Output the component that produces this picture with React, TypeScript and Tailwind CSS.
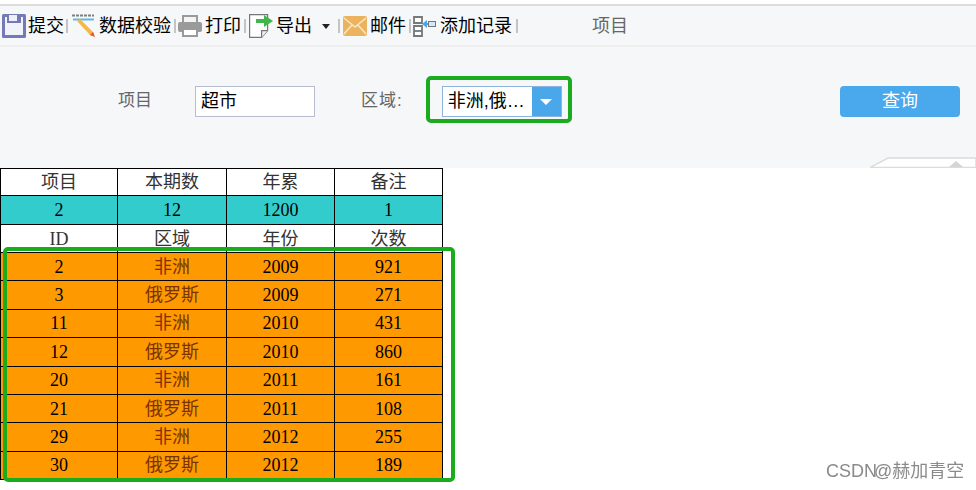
const sans = "font-['Liberation_Sans','Noto_Sans_CJK_SC',sans-serif]";

const dataRows = [
  ["2", "非洲", "2009", "921"],
  ["3", "俄罗斯", "2009", "271"],
  ["11", "非洲", "2010", "431"],
  ["12", "俄罗斯", "2010", "860"],
  ["20", "非洲", "2011", "161"],
  ["21", "俄罗斯", "2011", "108"],
  ["29", "非洲", "2012", "255"],
  ["30", "俄罗斯", "2012", "189"],
];

function Sep({ className }: { className: string }) {
  return <span className={`w-[2px] h-[14px] bg-[#c4c4c4] shrink-0 ${className}`} />;
}

function SaveIcon() {
  return (
    <svg width="24" height="24" viewBox="0 0 24 24">
      <rect x="0" y="0" width="24" height="24" rx="1.5" fill="#7479b8" />
      <path d="M3 3h18v18H3z" fill="#f2f3fa" />
      <path d="M5 0h14v9H5z" fill="#7479b8" />
      <path d="M7 1h8v6H7z" fill="#eef0f8" />
    </svg>
  );
}

function CheckIcon() {
  return (
    <svg width="24" height="24" viewBox="0 0 24 24">
      <path d="M0 1.5h22" stroke="#7f7f7f" strokeWidth="2" strokeDasharray="3 1" />
      <path d="M1 5.5h21" stroke="#5cb8e8" strokeWidth="2" />
      <path d="M5 7l3-2 14 14-1 3-3-1z" fill="#f2b84b" />
      <path d="M18 21l3-3 2 5z" fill="#e5532d" />
    </svg>
  );
}

function PrintIcon() {
  return (
    <svg width="24" height="24" viewBox="0 0 24 24">
      <path d="M5 2h14v7H5z" fill="#f4f4f4" stroke="#9a9a9a" strokeWidth="2" />
      <rect x="0" y="8" width="24" height="10" rx="2" fill="#9a9a9a" />
      <path d="M5 15h14v7H5z" fill="#fff" stroke="#9a9a9a" strokeWidth="2" />
    </svg>
  );
}

function ExportIcon() {
  return (
    <svg width="24" height="24" viewBox="0 0 24 24">
      <path d="M.6.6h18v16l-6 6.8H.6z" fill="#fff" stroke="#777" strokeWidth="1.2" />
      <path d="M12.6 23.4v-6.8h6" fill="#eee" stroke="#777" strokeWidth="1.2" />
      <path d="M7 5h8V1l9 6-9 6V9H7z" fill="#3fb54a" />
    </svg>
  );
}

function MailIcon() {
  return (
    <svg width="24" height="20" viewBox="0 0 24 20">
      <rect width="24" height="20" rx="2" fill="#ecb35f" />
      <path d="M1 2l11 9 11-9M1 18l8-9M23 18l-8-9" fill="none" stroke="#fbe6c4" strokeWidth="1.5" />
    </svg>
  );
}

function AddIcon() {
  return (
    <svg width="23" height="21" viewBox="0 0 23 21">
      <path d="M1 1h8v6H1zM1 10h8v10H1z" fill="#fff" stroke="#777" strokeWidth="1.8" />
      <path d="M1 15h8" stroke="#777" strokeWidth="1.8" />
      <path d="M9 8l5-4v8z" fill="#4aa5ee" />
      <path d="M14 8h2" stroke="#4aa5ee" strokeWidth="2" />
      <rect x="15.5" y="5.5" width="7" height="5" fill="#d5e8f8" stroke="#777" />
    </svg>
  );
}

function Toolbar() {
  return (
    <div className={`h-[43px] mt-[4px] pt-[1px] border-t-2 border-b-2 border-t-[#dcdcdc] border-b-[#eeeeee] bg-[#f6f7f9] flex items-center pl-[2px] text-[18px] text-black ${sans}`}>
      <SaveIcon />
      <span className="ml-[2px]">提交</span>
      <Sep className="ml-[2px]" />
      <span className="ml-[4px] flex"><CheckIcon /></span>
      <span className="ml-[3px]">数据校验</span>
      <Sep className="ml-[3px]" />
      <span className="ml-[2px] flex"><PrintIcon /></span>
      <span className="ml-[3px]">打印</span>
      <Sep className="ml-[3px]" />
      <span className="ml-[3px] flex"><ExportIcon /></span>
      <span className="ml-[3px]">导出</span>
      <span className="ml-[10px] w-0 h-0 border-x-[4.5px] border-t-[5px] border-x-transparent border-t-[#222]" />
      <Sep className="ml-[8px]" />
      <span className="ml-[3px] flex"><MailIcon /></span>
      <span className="ml-[3px]">邮件</span>
      <Sep className="ml-[3px]" />
      <span className="ml-[2px] flex"><AddIcon /></span>
      <span className="ml-[4px]">添加记录</span>
      <Sep className="ml-[4px]" />
      <span className="ml-[74px] text-[#666]">项目</span>
    </div>
  );
}

function FilterBar() {
  return (
    <div className={`relative h-[121px] bg-[#f6f7f9] flex items-start pt-[39px] text-[17px] ${sans}`}>
      <span className="ml-[118px] mt-[2px] text-[#666] leading-[25px]">项目</span>
      <div className="ml-[43px] w-[120px] h-[31px] bg-white border border-[#b6bdd0] pl-[5px] text-[18px] leading-[29px] text-black">超市</div>
      <span className="ml-[46px] mt-[2px] text-[#666] tracking-[1px] leading-[25px]">区域:</span>
      <div className="ml-[23px] -mt-[10px] w-[146px] h-[47px] border-[4px] border-[#1aab1f] rounded-[5px] pl-[12px] pt-[6px]">
        <div className="w-[120px] h-[31px] flex border border-[#8fb4dc] bg-white">
          <span className="flex-1 pl-[5px] text-[18px] leading-[29px] text-black whitespace-nowrap overflow-hidden">非洲,俄…</span>
          <span className="w-[29px] bg-[#4aa8ea] flex items-center justify-center">
            <span className="w-0 h-0 border-x-[6px] border-t-[6px] border-x-transparent border-t-white" />
          </span>
        </div>
      </div>
      <button className="absolute left-[840px] top-[39px] w-[120px] h-[31px] bg-[#4aa8ec] rounded-[4px] text-white text-[18px] leading-[31px]">查询</button>
      <div className="absolute right-0 bottom-0 w-[106px] h-[11px]">
        <svg width="106" height="11" viewBox="0 0 106 11">
          <path d="M0 10.5L18 1H106V10.5z" fill="#fff" stroke="#dcdcdc" strokeWidth="1.5" />
          <path d="M79 10l7-6 7 6z" fill="#d4d4d4" />
        </svg>
      </div>
    </div>
  );
}

function Row({ cells, bg, h, top }: { cells: string[]; bg: string; h: string; top?: boolean }) {
  return (
    <tr className={`${bg} ${h}`}>
      {cells.map((c, i) => (
        <td key={i} className={`border border-black p-0 text-center ${top ? "text-[#333]" : ""}`}>
          {c}
        </td>
      ))}
    </tr>
  );
}

function DataTable() {
  return (
    <table className="table-fixed border-collapse w-[442px] text-[18px] leading-[24px] text-black font-['Liberation_Serif','Noto_Sans_CJK_SC',serif]">
      <colgroup>
        <col className="w-[117px]" />
        <col className="w-[109px]" />
        <col className="w-[108px]" />
        <col className="w-[108px]" />
      </colgroup>
      <tbody>
        <Row cells={["项目", "本期数", "年累", "备注"]} bg="bg-white" h="h-[27px]" top />
        <Row cells={["2", "12", "1200", "1"]} bg="bg-[#33cccc]" h="h-[29px]" />
        <Row cells={["ID", "区域", "年份", "次数"]} bg="bg-white" h="h-[28px]" top />
        {dataRows.map((r) => (
          <tr key={r[0]} className="bg-[#ff9900] h-[28.4px]">
            <td className="border border-black p-0 text-center">{r[0]}</td>
            <td className="border border-black p-0 text-center text-[#7a3300]">{r[1]}</td>
            <td className="border border-black p-0 text-center">{r[2]}</td>
            <td className="border border-black p-0 text-center">{r[3]}</td>
          </tr>
        ))}
      </tbody>
    </table>
  );
}

export default function App() {
  return (
    <div className="relative w-[976px] h-[490px] overflow-hidden bg-white">
      <Toolbar />
      <FilterBar />
      <DataTable />
      <div className="absolute left-[3px] top-[247px] w-[452px] h-[235px] border-[4px] border-[#1aab1f] rounded-[5px]" />
      <div className={`absolute left-[826px] top-[459px] text-[18px] leading-[24px] text-[#8a8a8a] whitespace-nowrap blur-[0.4px] ${sans}`}>CSDN</div>
      <div className={`absolute left-[874px] top-[459px] text-[18px] leading-[24px] text-[#8a8a8a] whitespace-nowrap blur-[0.4px] ${sans}`}>@赫加青空</div>
    </div>
  );
}
